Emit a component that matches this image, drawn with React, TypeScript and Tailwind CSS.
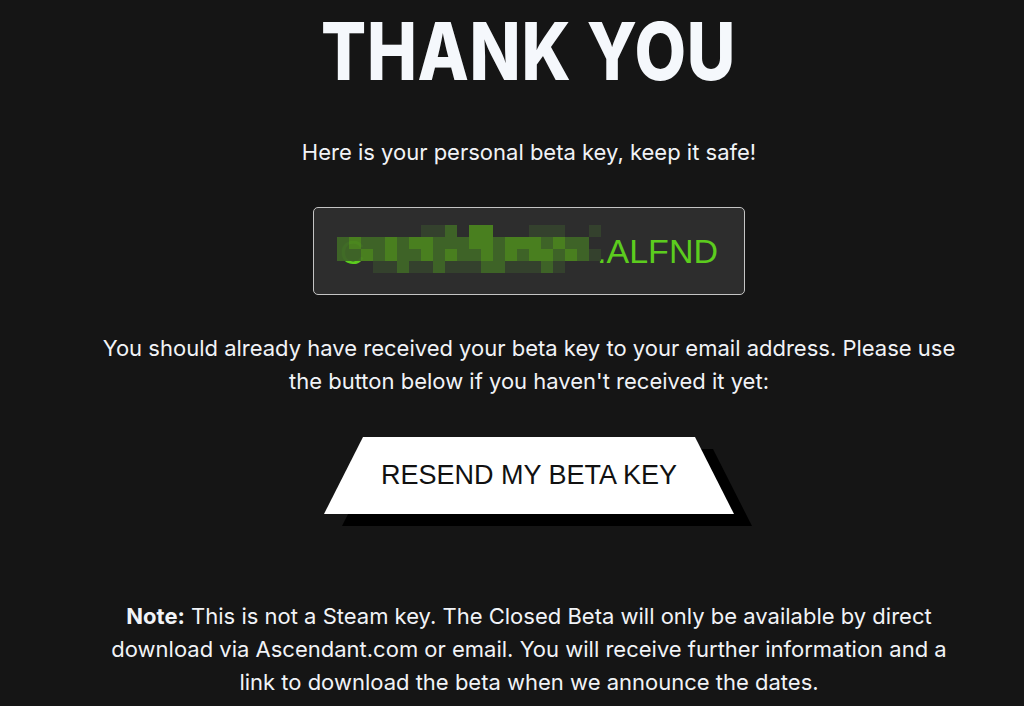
import React from "react";

const mosaic = [
  ".......aab.cc...aaa..a",
  "bcbbcbccbbbccbcccbcbb.",
  "bbcbcbbcbcbbcbcbccbcba",
  "...aabaabaaabbaaaba...",
];

const cellClass: Record<string, string> = {
  ".": "bg-transparent",
  a: "bg-[#35432e]",
  b: "bg-[#3f6627]",
  c: "bg-[#4b841f]",
};

export default function App() {
  return (
    <div className="min-h-[706px] w-full bg-[#151515] text-[#f1f3f7] flex flex-col items-center overflow-hidden pl-[34px]" style={{ fontFamily: "Inter, 'Noto Sans', sans-serif" }}>
      <h1 className="pt-[11px] text-[80px] leading-none font-extrabold scale-x-[0.835] tracking-[0.01em] text-[#f5f8fc]">
        THANK YOU
      </h1>
      <p className="mt-[45px] text-[22px] leading-[33px]">Here is your personal beta key, keep it safe!</p>
      <div className="mt-[38px] w-[432px] h-[88px] rounded-[5px] border border-[#c4c4c4] bg-[#2d2d2d] relative flex items-center justify-end pr-[26px]">
        <span className="text-[34px] text-[#5ccc1e]" style={{ fontFamily: "'Liberation Sans', Arial, sans-serif" }}>
          .ALFND
        </span>
        <span className="absolute left-[26px] top-[27px] text-[34px] leading-none text-[#5ccc1e]" style={{ fontFamily: "'Liberation Sans', Arial, sans-serif" }}>
          C
        </span>
        <div className="absolute left-[23px] top-[17px] flex flex-col opacity-95">
          {mosaic.map((row, i) => (
            <div key={i} className="flex">
              {row.split("").map((c, j) => (
                <div key={j} className={`w-[12px] h-[12px] ${cellClass[c]}`} />
              ))}
            </div>
          ))}
        </div>
      </div>
      <p className="mt-[37px] text-[22px] leading-[33px] text-center">
        You should already have received your beta key to your email address. Please use
        <br />
        the button below if you haven't received it yet:
      </p>
      <div className="mt-[39px] relative w-[410px] h-[89px]">
        <div className="absolute left-[18px] top-[12px] w-[410px] h-[77px] bg-black [clip-path:polygon(39px_0,371px_0,100%_100%,0_100%)]" />
        <div className="absolute left-0 top-0 w-[410px] h-[77px] bg-white [clip-path:polygon(39px_0,371px_0,100%_100%,0_100%)] flex items-center justify-center">
          <span className="text-[27px] text-[#111111]" style={{ fontFamily: "'Liberation Sans', Arial, sans-serif" }}>
            RESEND MY BETA KEY
          </span>
        </div>
      </div>
      <p className="mt-[74px] text-[22px] leading-[33px] text-center">
        <span className="font-bold">Note:</span> This is not a Steam key. The Closed Beta will only be available by direct
        <br />
        download via Ascendant.com or email. You will receive further information and a
        <br />
        link to download the beta when we announce the dates.
      </p>
    </div>
  );
}
